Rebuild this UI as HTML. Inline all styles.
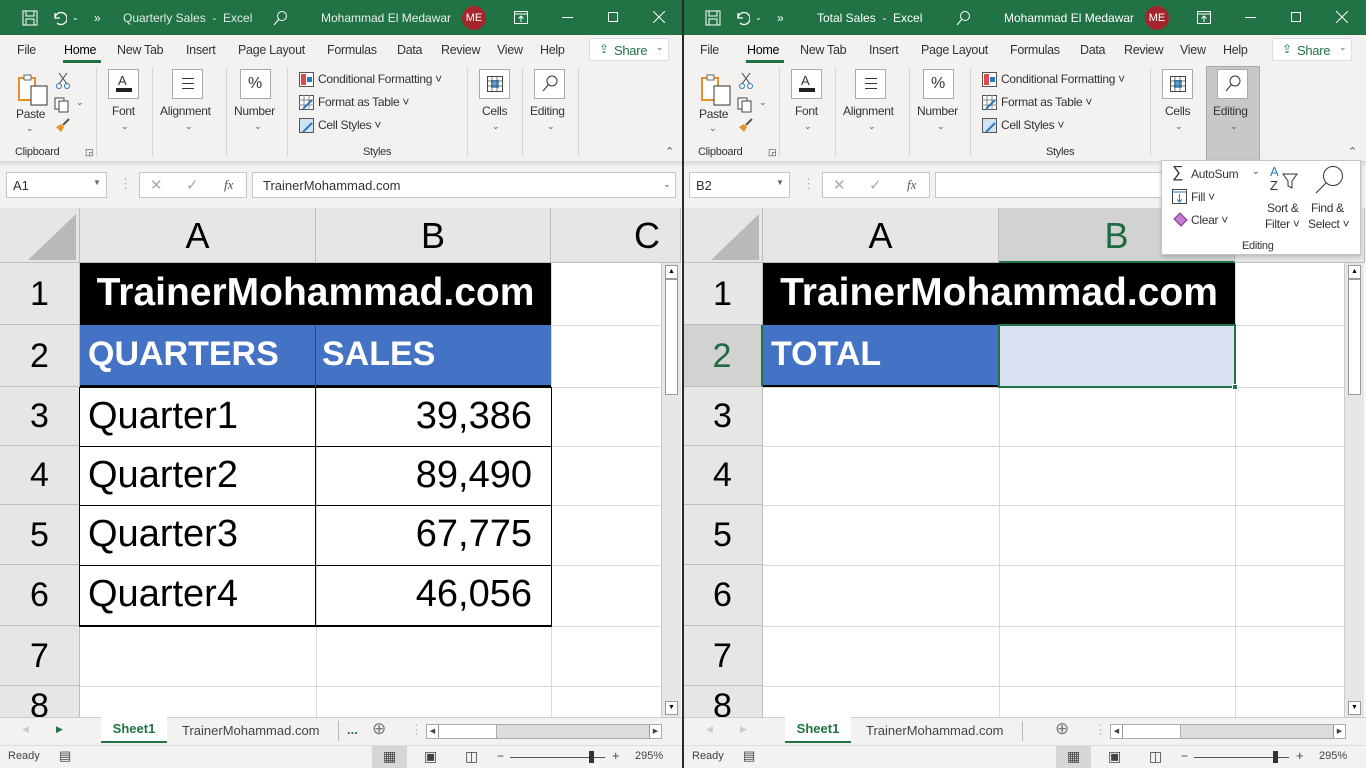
<!DOCTYPE html>
<html><head><meta charset="utf-8"><style>
*{box-sizing:border-box;margin:0;padding:0}
body{width:1366px;height:768px;overflow:hidden;background:#2b2b2b;font-family:"Liberation Sans",sans-serif;position:relative}
.win{position:absolute;top:0;width:682px;height:768px;background:#f3f2f1;overflow:hidden}
.a{position:absolute}
.title{left:0;top:0;width:682px;height:35px;background:#217346;color:#fff;font-size:12px}
.title .a{top:11px}
.tabs{top:35px;left:0;width:682px;height:30px;font-size:12.5px;color:#333;letter-spacing:-0.3px}
.tabs span{position:absolute;top:8px}
.rib{top:65px;left:0;width:682px;height:96px;font-size:12px;color:#333;letter-spacing:-0.3px}
.sep{position:absolute;top:3px;width:1px;height:88px;background:#d6d6d6}
.box{position:absolute;top:4px;width:31px;height:30px;border:1px solid #aaa;background:#fff}
.lbl{position:absolute;font-size:12px;color:#333}
.chev{position:absolute;font-size:9px;color:#555}
.shadow{top:161px;left:0;width:682px;height:6px;background:linear-gradient(#dadada,#f3f2f1)}
.fbox{position:absolute;background:#fff;border:1px solid #c6c6c6;height:26px;top:172px;font-size:13px;color:#333}
.grid{top:208px;left:0;width:682px;height:509px;background:#fff;overflow:hidden}
.rh{position:absolute;left:0;width:80px;background:#e6e6e6;border-bottom:1px solid #bdbdbd;border-right:1px solid #bdbdbd;font-size:34px;text-align:center;color:#000}
.ch{position:absolute;top:0;height:55px;background:#e6e6e6;border-right:1px solid #bdbdbd;border-bottom:1px solid #bdbdbd;font-size:36px;text-align:center;line-height:55px;color:#000}
.vl{position:absolute;width:1px;background:#d9d9d9;top:55px;height:460px}
.hl{position:absolute;height:1px;background:#d9d9d9;left:80px;width:600px}
.cell{position:absolute;font-size:38px;color:#000;white-space:nowrap}
.vs{position:absolute;top:55px;left:661px;width:20px;height:454px;background:#e6e6e6;border-left:1px solid #ccc}
.stabs{top:717px;left:0;width:682px;height:28px;background:#f3f2f1;font-size:13px;color:#444;border-top:1px solid #ccc}
.status{top:745px;left:0;width:682px;height:23px;background:#f3f2f1;font-size:11px;color:#444;border-top:1px solid #ddd}
</style></head><body>

<!-- LEFT WINDOW -->
<div class="win" style="left:0">
 <div class="a title">
  <svg class="a" style="left:22px;top:10px" width="16" height="16"><rect x="1" y="1" width="14" height="14" fill="none" stroke="#fff"/><rect x="4" y="1" width="8" height="5" fill="none" stroke="#fff"/><rect x="4" y="9" width="8" height="6" fill="none" stroke="#fff"/></svg>
  <svg class="a" style="left:51px;top:10px" width="16" height="16"><path d="M4 3v5h5M4 8a6 6 0 1 1 2 5" fill="none" stroke="#fff" stroke-width="1.3"/></svg>
  <span class="a" style="left:72px;font-size:8px;top:13px">⌄</span>
  <span class="a" style="left:94px">»</span>
  <span class="a" style="left:123px;color:#e0ece5">Quarterly Sales&nbsp; - &nbsp;Excel</span>
  <svg class="a" style="left:272px;top:10px" width="16" height="16"><circle cx="10" cy="6" r="4.5" fill="none" stroke="#fff"/><path d="M7 9l-5 6" stroke="#fff"/></svg>
  <span class="a" style="left:321px;color:#e8f0eb">Mohammad El Medawar</span>
  <div class="a" style="left:462px;top:6px;width:24px;height:24px;border-radius:12px;background:#a4262c;font-size:11px;line-height:24px;text-align:center">ME</div>
  <svg class="a" style="left:514px;top:11px" width="14" height="13"><rect x="0.5" y="0.5" width="13" height="12" fill="none" stroke="#fff"/><path d="M0 3h14M7 11V5M4.5 7.5L7 5l2.5 2.5" fill="none" stroke="#fff"/></svg>
  <div class="a" style="left:562px;top:17px;width:11px;height:1px;background:#fff"></div>
  <div class="a" style="left:608px;top:12px;width:10px;height:10px;border:1px solid #fff"></div>
  <svg class="a" style="left:653px;top:11px" width="12" height="12"><path d="M0 0l12 12M12 0L0 12" stroke="#fff"/></svg>
 </div>
 <div class="a tabs">
  <span style="left:17px">File</span><span style="left:64px;color:#000">Home</span><span style="left:117px">New Tab</span><span style="left:186px">Insert</span><span style="left:238px">Page Layout</span><span style="left:327px">Formulas</span><span style="left:397px">Data</span><span style="left:441px">Review</span><span style="left:497px">View</span><span style="left:540px">Help</span>
  <div class="a" style="left:63px;top:25px;width:38px;height:3px;background:#217346"></div>
  <div class="a" style="left:589px;top:3px;width:80px;height:23px;background:#fff;border:1px solid #ddd;border-radius:2px;color:#217346"><span style="left:24px;top:4px;font-size:13px">Share</span><span style="left:9px;top:3px;font-size:12px">⇪</span><span style="left:66px;top:3px;font-size:9px">⌄</span></div>
 </div>
 <div class="a rib">
  <svg class="a" style="left:17px;top:8px" width="32" height="34"><rect x="2" y="5" width="16" height="22" fill="#fff" stroke="#e8912a" stroke-width="2"/><rect x="7" y="2" width="7" height="5" fill="#fff" stroke="#666"/><rect x="14" y="13" width="16" height="19" fill="#fff" stroke="#333"/></svg>
  <span class="lbl" style="left:16px;top:42px">Paste</span><span class="chev" style="left:26px;top:58px">⌄</span>
  <svg class="a" style="left:56px;top:7px" width="14" height="18"><path d="M3 1l8 11M11 1L3 12" stroke="#444"/><circle cx="3" cy="14" r="2.5" fill="none" stroke="#2b79c2"/><circle cx="11" cy="14" r="2.5" fill="none" stroke="#2b79c2"/></svg>
  <svg class="a" style="left:54px;top:32px" width="16" height="16"><rect x="1" y="1" width="9" height="11" fill="#fff" stroke="#444"/><rect x="5" y="4" width="9" height="11" fill="#fff" stroke="#444"/></svg>
  <span class="chev" style="left:76px;top:32px">⌄</span>
  <svg class="a" style="left:54px;top:53px" width="16" height="16"><path d="M9 7l6-6" stroke="#555" stroke-width="2"/><path d="M2 9l5-3 3 3-3 5z" fill="#e8912a"/></svg>
  <span class="lbl" style="left:15px;top:81px;font-size:11px">Clipboard</span><span class="lbl" style="left:85px;top:82px;font-size:9px">◲</span>
  <div class="sep" style="left:96px"></div>
  <div class="box" style="left:108px"><span class="a" style="left:9px;top:3px;font-size:13px">A</span><div class="a" style="left:7px;top:18px;width:16px;height:4px;background:#222"></div></div>
  <span class="lbl" style="left:112px;top:39px">Font</span><span class="chev" style="left:121px;top:56px">⌄</span>
  <div class="sep" style="left:152px"></div>
  <div class="box" style="left:172px"><div class="a" style="left:9px;top:8px;width:12px;border-top:1px solid #333;height:11px;border-bottom:1px solid #333"></div><div class="a" style="left:9px;top:13px;width:12px;height:1px;background:#333"></div></div>
  <span class="lbl" style="left:160px;top:39px">Alignment</span><span class="chev" style="left:185px;top:56px">⌄</span>
  <div class="sep" style="left:226px"></div>
  <div class="box" style="left:240px"><span class="a" style="left:7px;top:5px;font-size:16px">%</span></div>
  <span class="lbl" style="left:234px;top:39px">Number</span><span class="chev" style="left:254px;top:56px">⌄</span>
  <div class="sep" style="left:287px"></div>
  <svg class="a" style="left:299px;top:7px" width="15" height="15"><rect x=".5" y=".5" width="14" height="14" fill="#fff" stroke="#555"/><rect x="2" y="2" width="5" height="11" fill="#e04a4a"/><rect x="8" y="5" width="5" height="5" fill="#2b79c2"/></svg>
  <span class="lbl" style="left:318px;top:7px">Conditional Formatting ˅</span>
  <svg class="a" style="left:299px;top:30px" width="15" height="15"><rect x=".5" y=".5" width="14" height="14" fill="#fff" stroke="#555"/><path d="M0 5h15M5 0v15M10 0v15M0 10h15" stroke="#888"/><path d="M4 14l9-9" stroke="#2b79c2" stroke-width="2"/></svg>
  <span class="lbl" style="left:318px;top:30px">Format as Table ˅</span>
  <svg class="a" style="left:299px;top:53px" width="15" height="15"><rect x=".5" y=".5" width="14" height="14" fill="#cfe3f5" stroke="#555"/><path d="M4 14l9-9" stroke="#2b79c2" stroke-width="2"/></svg>
  <span class="lbl" style="left:318px;top:53px">Cell Styles ˅</span>
  <span class="lbl" style="left:363px;top:81px;font-size:11px">Styles</span>
  <div class="sep" style="left:467px"></div>
  <div class="box" style="left:479px"><svg class="a" style="left:7px;top:6px" width="16" height="16"><rect x=".5" y=".5" width="15" height="15" fill="#fff" stroke="#444"/><rect x="4" y="4" width="8" height="8" fill="#5aa0dc"/><path d="M0 5h16M0 10h16M5 0v16M10 0v16" stroke="#444" stroke-width=".7"/></svg></div>
  <span class="lbl" style="left:482px;top:39px">Cells</span><span class="chev" style="left:492px;top:56px">⌄</span>
  <div class="sep" style="left:522px"></div>
  <div class="box" style="left:534px"><svg class="a" style="left:7px;top:5px" width="16" height="18"><circle cx="10" cy="6" r="5" fill="none" stroke="#333"/><path d="M6.5 9.5L1 16" stroke="#333"/></svg></div>
  <span class="lbl" style="left:530px;top:39px">Editing</span><span class="chev" style="left:547px;top:56px">⌄</span>
  <div class="sep" style="left:578px"></div>
  <span class="chev" style="left:665px;top:80px;font-size:11px">⌃</span>
 </div>
 <div class="a shadow"></div>
 <div class="fbox" style="left:6px;width:101px"><span class="a" style="left:6px;top:5px">A1</span><span class="a" style="left:86px;top:5px;font-size:8px;color:#666">▼</span></div>
 <span class="a" style="left:119px;top:176px;color:#aaa;font-size:13px">⋮</span>
 <div class="fbox" style="left:139px;width:108px"><span class="a" style="left:10px;top:3px;color:#aaa;font-size:15px">✕</span><span class="a" style="left:46px;top:3px;color:#aaa;font-size:15px">✓</span><span class="a" style="left:84px;top:4px;font-style:italic;font-family:'Liberation Serif',serif;color:#555">fx</span></div>
 <div class="fbox" style="left:252px;width:424px"><span class="a" style="left:10px;top:5px">TrainerMohammad.com</span><span class="a" style="left:410px;top:6px;font-size:9px;color:#555">⌄</span></div>

 <div class="a grid">
  <div class="a" style="left:0;top:0;width:80px;height:55px;background:#e6e6e6;border-right:1px solid #bdbdbd;border-bottom:1px solid #bdbdbd"></div>
  <svg class="a" style="left:22px;top:4px" width="56" height="50"><path d="M54 2V48H6z" fill="#b9b9b9"/></svg>
  <div class="ch" style="left:80px;width:236px">A</div>
  <div class="ch" style="left:316px;width:235px">B</div>
  <div class="ch" style="left:551px;width:130px;text-align:left;padding-left:83px">C</div>
  <div class="rh" style="top:55px;height:62px;line-height:62px">1</div>
  <div class="rh" style="top:117px;height:62px;line-height:62px">2</div>
  <div class="rh" style="top:179px;height:59px;line-height:59px">3</div>
  <div class="rh" style="top:238px;height:59px;line-height:59px">4</div>
  <div class="rh" style="top:297px;height:60px;line-height:60px">5</div>
  <div class="rh" style="top:357px;height:61px;line-height:61px">6</div>
  <div class="rh" style="top:418px;height:60px;line-height:60px">7</div>
  <div class="rh" style="top:478px;height:60px;line-height:40px;overflow:hidden">8</div>
  <div class="vl" style="left:316px"></div><div class="vl" style="left:551px"></div>
  <div class="hl" style="top:117px"></div><div class="hl" style="top:179px"></div><div class="hl" style="top:238px"></div><div class="hl" style="top:297px"></div><div class="hl" style="top:357px"></div><div class="hl" style="top:418px"></div><div class="hl" style="top:478px"></div>
  <div class="a" style="left:80px;top:55px;width:471px;height:62px;background:#000"></div>
  <div class="cell" style="left:80px;top:63px;width:471px;text-align:center;color:#fff;font-weight:bold;font-size:39px">TrainerMohammad.com</div>
  <div class="a" style="left:80px;top:117px;width:471px;height:62px;background:#4472c4;border-bottom:2px solid #000"></div>
  <div class="a" style="left:315px;top:117px;width:1px;height:62px;background:#2a4a80"></div>
  <div class="cell" style="left:88px;top:127px;color:#fff;font-weight:bold;font-size:34px">QUARTERS</div>
  <div class="cell" style="left:322px;top:127px;color:#fff;font-weight:bold;font-size:34px">SALES</div>
  <div class="a" style="left:79px;top:179px;width:473px;height:240px;border:1px solid #000;border-bottom:2px solid #000"></div>
  <div class="a" style="left:315px;top:179px;width:1px;height:240px;background:#000"></div>
  <div class="a" style="left:80px;top:238px;width:471px;height:1px;background:#000"></div>
  <div class="a" style="left:80px;top:297px;width:471px;height:1px;background:#000"></div>
  <div class="a" style="left:80px;top:357px;width:471px;height:1px;background:#000"></div>
  <div class="cell" style="left:88px;top:187px">Quarter1</div><div class="cell" style="left:316px;width:216px;text-align:right;top:187px">39,386</div>
  <div class="cell" style="left:88px;top:246px">Quarter2</div><div class="cell" style="left:316px;width:216px;text-align:right;top:246px">89,490</div>
  <div class="cell" style="left:88px;top:305px">Quarter3</div><div class="cell" style="left:316px;width:216px;text-align:right;top:305px">67,775</div>
  <div class="cell" style="left:88px;top:365px">Quarter4</div><div class="cell" style="left:316px;width:216px;text-align:right;top:365px">46,056</div>
  <div class="vs"><div class="a" style="left:3px;top:2px;width:13px;height:14px;background:#fff;border:1px solid #999;font-size:7px;text-align:center;line-height:12px">▲</div><div class="a" style="left:3px;top:16px;width:13px;height:116px;background:#fff;border:1px solid #999"></div><div class="a" style="left:3px;bottom:2px;width:13px;height:14px;background:#fff;border:1px solid #999;font-size:7px;text-align:center;line-height:12px">▼</div></div>
 </div>
 <div class="a stabs">
  <span class="a" style="left:22px;top:6px;color:#ccc;font-size:9px">◀</span><span class="a" style="left:56px;top:6px;color:#217346;font-size:9px">▶</span>
  <div class="a" style="left:101px;top:-1px;width:66px;height:26px;background:#fff;border-bottom:2px solid #217346;color:#217346;font-weight:bold;text-align:center;line-height:24px">Sheet1</div>
  <span class="a" style="left:182px;top:5px">TrainerMohammad.com</span>
  <div class="a" style="left:338px;top:3px;width:1px;height:20px;background:#bbb"></div>
  <span class="a" style="left:347px;top:4px;color:#217346;font-weight:bold">...</span>
  <span class="a" style="left:372px;top:1px;font-size:17px;color:#777">⊕</span>
  <span class="a" style="left:410px;top:4px;color:#bbb">⋮</span>
  <div class="a" style="left:426px;top:6px;width:236px;height:15px;background:#ddd;border:1px solid #aaa"><div class="a" style="left:0;top:0;width:12px;height:13px;background:#fff;border-right:1px solid #999;font-size:7px;line-height:13px;text-align:center">◀</div><div class="a" style="left:12px;top:0;width:58px;height:13px;background:#fff;border-right:1px solid #aaa"></div><div class="a" style="right:0;top:0;width:12px;height:13px;background:#fff;border-left:1px solid #999;font-size:7px;line-height:13px;text-align:center">▶</div></div>
 </div>
 <div class="a status">
  <span class="a" style="left:8px;top:4px">Ready</span><span class="a" style="left:59px;top:2px;font-size:13px">▤</span>
  <div class="a" style="left:372px;top:0;width:35px;height:23px;background:#d6d6d6"></div>
  <span class="a" style="left:383px;top:2px;font-size:14px">▦</span><span class="a" style="left:424px;top:2px;font-size:14px">▣</span><span class="a" style="left:465px;top:2px;font-size:14px">◫</span>
  <span class="a" style="left:497px;top:3px;font-size:12px">−</span>
  <div class="a" style="left:510px;top:11px;width:95px;height:1px;background:#555"></div>
  <div class="a" style="left:589px;top:5px;width:5px;height:12px;background:#333"></div>
  <span class="a" style="left:612px;top:2px;font-size:13px">+</span><span class="a" style="left:635px;top:4px">295%</span>
 </div>
</div>

<!-- RIGHT WINDOW -->
<div class="win" style="left:684px;width:682px">
 <div class="a title">
  <svg class="a" style="left:21px;top:10px" width="16" height="16"><rect x="1" y="1" width="14" height="14" fill="none" stroke="#fff"/><rect x="4" y="1" width="8" height="5" fill="none" stroke="#fff"/><rect x="4" y="9" width="8" height="6" fill="none" stroke="#fff"/></svg>
  <svg class="a" style="left:50px;top:10px" width="16" height="16"><path d="M4 3v5h5M4 8a6 6 0 1 1 2 5" fill="none" stroke="#fff" stroke-width="1.3"/></svg>
  <span class="a" style="left:71px;font-size:8px;top:13px">⌄</span>
  <span class="a" style="left:93px">»</span>
  <span class="a" style="left:133px;color:#fff">Total Sales&nbsp; - &nbsp;Excel</span>
  <svg class="a" style="left:271px;top:10px" width="16" height="16"><circle cx="10" cy="6" r="4.5" fill="none" stroke="#fff"/><path d="M7 9l-5 6" stroke="#fff"/></svg>
  <span class="a" style="left:320px;color:#fff">Mohammad El Medawar</span>
  <div class="a" style="left:461px;top:6px;width:24px;height:24px;border-radius:12px;background:#a4262c;font-size:11px;line-height:24px;text-align:center">ME</div>
  <svg class="a" style="left:513px;top:11px" width="14" height="13"><rect x="0.5" y="0.5" width="13" height="12" fill="none" stroke="#fff"/><path d="M0 3h14M7 11V5M4.5 7.5L7 5l2.5 2.5" fill="none" stroke="#fff"/></svg>
  <div class="a" style="left:561px;top:17px;width:11px;height:1px;background:#fff"></div>
  <div class="a" style="left:607px;top:12px;width:10px;height:10px;border:1px solid #fff"></div>
  <svg class="a" style="left:652px;top:11px" width="12" height="12"><path d="M0 0l12 12M12 0L0 12" stroke="#fff"/></svg>
 </div>
 <div class="a tabs" style="left:-1px">
  <span style="left:17px">File</span><span style="left:64px;color:#000">Home</span><span style="left:117px">New Tab</span><span style="left:186px">Insert</span><span style="left:238px">Page Layout</span><span style="left:327px">Formulas</span><span style="left:397px">Data</span><span style="left:441px">Review</span><span style="left:497px">View</span><span style="left:540px">Help</span>
  <div class="a" style="left:63px;top:25px;width:38px;height:3px;background:#217346"></div>
  <div class="a" style="left:589px;top:3px;width:80px;height:23px;background:#fff;border:1px solid #ddd;border-radius:2px;color:#217346"><span style="left:24px;top:4px;font-size:13px">Share</span><span style="left:9px;top:3px;font-size:12px">⇪</span><span style="left:66px;top:3px;font-size:9px">⌄</span></div>
 </div>
 <div class="a rib" style="left:-1px">
  <svg class="a" style="left:17px;top:8px" width="32" height="34"><rect x="2" y="5" width="16" height="22" fill="#fff" stroke="#e8912a" stroke-width="2"/><rect x="7" y="2" width="7" height="5" fill="#fff" stroke="#666"/><rect x="14" y="13" width="16" height="19" fill="#fff" stroke="#333"/></svg>
  <span class="lbl" style="left:16px;top:42px">Paste</span><span class="chev" style="left:26px;top:58px">⌄</span>
  <svg class="a" style="left:56px;top:7px" width="14" height="18"><path d="M3 1l8 11M11 1L3 12" stroke="#444"/><circle cx="3" cy="14" r="2.5" fill="none" stroke="#2b79c2"/><circle cx="11" cy="14" r="2.5" fill="none" stroke="#2b79c2"/></svg>
  <svg class="a" style="left:54px;top:32px" width="16" height="16"><rect x="1" y="1" width="9" height="11" fill="#fff" stroke="#444"/><rect x="5" y="4" width="9" height="11" fill="#fff" stroke="#444"/></svg>
  <span class="chev" style="left:76px;top:32px">⌄</span>
  <svg class="a" style="left:54px;top:53px" width="16" height="16"><path d="M9 7l6-6" stroke="#555" stroke-width="2"/><path d="M2 9l5-3 3 3-3 5z" fill="#e8912a"/></svg>
  <span class="lbl" style="left:15px;top:81px;font-size:11px">Clipboard</span><span class="lbl" style="left:85px;top:82px;font-size:9px">◲</span>
  <div class="sep" style="left:96px"></div>
  <div class="box" style="left:108px"><span class="a" style="left:9px;top:3px;font-size:13px">A</span><div class="a" style="left:7px;top:18px;width:16px;height:4px;background:#222"></div></div>
  <span class="lbl" style="left:112px;top:39px">Font</span><span class="chev" style="left:121px;top:56px">⌄</span>
  <div class="sep" style="left:152px"></div>
  <div class="box" style="left:172px"><div class="a" style="left:9px;top:8px;width:12px;border-top:1px solid #333;height:11px;border-bottom:1px solid #333"></div><div class="a" style="left:9px;top:13px;width:12px;height:1px;background:#333"></div></div>
  <span class="lbl" style="left:160px;top:39px">Alignment</span><span class="chev" style="left:185px;top:56px">⌄</span>
  <div class="sep" style="left:226px"></div>
  <div class="box" style="left:240px"><span class="a" style="left:7px;top:5px;font-size:16px">%</span></div>
  <span class="lbl" style="left:234px;top:39px">Number</span><span class="chev" style="left:254px;top:56px">⌄</span>
  <div class="sep" style="left:287px"></div>
  <svg class="a" style="left:299px;top:7px" width="15" height="15"><rect x=".5" y=".5" width="14" height="14" fill="#fff" stroke="#555"/><rect x="2" y="2" width="5" height="11" fill="#e04a4a"/><rect x="8" y="5" width="5" height="5" fill="#2b79c2"/></svg>
  <span class="lbl" style="left:318px;top:7px">Conditional Formatting ˅</span>
  <svg class="a" style="left:299px;top:30px" width="15" height="15"><rect x=".5" y=".5" width="14" height="14" fill="#fff" stroke="#555"/><path d="M0 5h15M5 0v15M10 0v15M0 10h15" stroke="#888"/><path d="M4 14l9-9" stroke="#2b79c2" stroke-width="2"/></svg>
  <span class="lbl" style="left:318px;top:30px">Format as Table ˅</span>
  <svg class="a" style="left:299px;top:53px" width="15" height="15"><rect x=".5" y=".5" width="14" height="14" fill="#cfe3f5" stroke="#555"/><path d="M4 14l9-9" stroke="#2b79c2" stroke-width="2"/></svg>
  <span class="lbl" style="left:318px;top:53px">Cell Styles ˅</span>
  <span class="lbl" style="left:363px;top:81px;font-size:11px">Styles</span>
  <div class="sep" style="left:467px"></div>
  <div class="box" style="left:479px"><svg class="a" style="left:7px;top:6px" width="16" height="16"><rect x=".5" y=".5" width="15" height="15" fill="#fff" stroke="#444"/><rect x="4" y="4" width="8" height="8" fill="#5aa0dc"/><path d="M0 5h16M0 10h16M5 0v16M10 0v16" stroke="#444" stroke-width=".7"/></svg></div>
  <span class="lbl" style="left:482px;top:39px">Cells</span><span class="chev" style="left:492px;top:56px">⌄</span>
  <div class="a" style="left:523px;top:1px;width:54px;height:95px;background:#c8c8c8;border:1px solid #aaa"></div>
  <div class="box" style="left:534px"><svg class="a" style="left:7px;top:5px" width="16" height="18"><circle cx="10" cy="6" r="5" fill="none" stroke="#333"/><path d="M6.5 9.5L1 16" stroke="#333"/></svg></div>
  <span class="lbl" style="left:530px;top:39px">Editing</span><span class="chev" style="left:547px;top:56px">⌄</span>
  <span class="chev" style="left:665px;top:80px;font-size:11px">⌃</span>
 </div>
 <div class="a shadow"></div>
 <div class="fbox" style="left:5px;width:101px"><span class="a" style="left:6px;top:5px">B2</span><span class="a" style="left:86px;top:5px;font-size:8px;color:#666">▼</span></div>
 <span class="a" style="left:118px;top:176px;color:#aaa;font-size:13px">⋮</span>
 <div class="fbox" style="left:138px;width:108px"><span class="a" style="left:10px;top:3px;color:#aaa;font-size:15px">✕</span><span class="a" style="left:46px;top:3px;color:#aaa;font-size:15px">✓</span><span class="a" style="left:84px;top:4px;font-style:italic;font-family:'Liberation Serif',serif;color:#555">fx</span></div>
 <div class="fbox" style="left:251px;width:424px"></div>

 <div class="a grid" style="left:-1px">
  <div class="a" style="left:0;top:0;width:80px;height:55px;background:#e6e6e6;border-right:1px solid #bdbdbd;border-bottom:1px solid #bdbdbd"></div>
  <svg class="a" style="left:22px;top:4px" width="56" height="50"><path d="M54 2V48H6z" fill="#b9b9b9"/></svg>
  <div class="ch" style="left:80px;width:236px">A</div>
  <div class="ch" style="left:316px;width:236px;background:#d2d2d2;color:#1e6b41;border-bottom:2px solid #217346">B</div>
  <div class="ch" style="left:552px;width:130px"></div>
  <div class="rh" style="top:55px;height:62px;line-height:62px">1</div>
  <div class="rh" style="top:117px;height:62px;line-height:62px;background:#d2d2d2;color:#1e6b41;border-right:2px solid #217346">2</div>
  <div class="rh" style="top:179px;height:59px;line-height:59px">3</div>
  <div class="rh" style="top:238px;height:59px;line-height:59px">4</div>
  <div class="rh" style="top:297px;height:60px;line-height:60px">5</div>
  <div class="rh" style="top:357px;height:61px;line-height:61px">6</div>
  <div class="rh" style="top:418px;height:60px;line-height:60px">7</div>
  <div class="rh" style="top:478px;height:60px;line-height:40px;overflow:hidden">8</div>
  <div class="vl" style="left:316px"></div><div class="vl" style="left:552px"></div>
  <div class="hl" style="top:117px"></div><div class="hl" style="top:179px"></div><div class="hl" style="top:238px"></div><div class="hl" style="top:297px"></div><div class="hl" style="top:357px"></div><div class="hl" style="top:418px"></div><div class="hl" style="top:478px"></div>
  <div class="a" style="left:80px;top:55px;width:472px;height:62px;background:#000"></div>
  <div class="cell" style="left:80px;top:63px;width:472px;text-align:center;color:#fff;font-weight:bold;font-size:39px">TrainerMohammad.com</div>
  <div class="a" style="left:80px;top:117px;width:236px;height:62px;background:#4472c4;border-bottom:2px solid #000"></div>
  <div class="cell" style="left:88px;top:127px;color:#fff;font-weight:bold;font-size:34px">TOTAL</div>
  <div class="a" style="left:315px;top:116px;width:238px;height:64px;background:#d9e1f2;border:2px solid #217346"></div>
  <div class="a" style="left:549px;top:176px;width:6px;height:6px;background:#217346;border:1px solid #fff"></div>
  <div class="vs"><div class="a" style="left:3px;top:2px;width:13px;height:14px;background:#fff;border:1px solid #999;font-size:7px;text-align:center;line-height:12px">▲</div><div class="a" style="left:3px;top:16px;width:13px;height:116px;background:#fff;border:1px solid #999"></div><div class="a" style="left:3px;bottom:2px;width:13px;height:14px;background:#fff;border:1px solid #999;font-size:7px;text-align:center;line-height:12px">▼</div></div>
 </div>
 <div class="a stabs">
  <span class="a" style="left:22px;top:6px;color:#ccc;font-size:9px">◀</span><span class="a" style="left:56px;top:6px;color:#ccc;font-size:9px">▶</span>
  <div class="a" style="left:101px;top:-1px;width:66px;height:26px;background:#fff;border-bottom:2px solid #217346;color:#217346;font-weight:bold;text-align:center;line-height:24px">Sheet1</div>
  <span class="a" style="left:182px;top:5px">TrainerMohammad.com</span>
  <div class="a" style="left:338px;top:3px;width:1px;height:20px;background:#bbb"></div>
  <span class="a" style="left:371px;top:1px;font-size:17px;color:#777">⊕</span>
  <span class="a" style="left:410px;top:4px;color:#bbb">⋮</span>
  <div class="a" style="left:426px;top:6px;width:236px;height:15px;background:#ddd;border:1px solid #aaa"><div class="a" style="left:0;top:0;width:12px;height:13px;background:#fff;border-right:1px solid #999;font-size:7px;line-height:13px;text-align:center">◀</div><div class="a" style="left:12px;top:0;width:58px;height:13px;background:#fff;border-right:1px solid #aaa"></div><div class="a" style="right:0;top:0;width:12px;height:13px;background:#fff;border-left:1px solid #999;font-size:7px;line-height:13px;text-align:center">▶</div></div>
 </div>
 <div class="a status">
  <span class="a" style="left:8px;top:4px">Ready</span><span class="a" style="left:59px;top:2px;font-size:13px">▤</span>
  <div class="a" style="left:372px;top:0;width:35px;height:23px;background:#d6d6d6"></div>
  <span class="a" style="left:383px;top:2px;font-size:14px">▦</span><span class="a" style="left:424px;top:2px;font-size:14px">▣</span><span class="a" style="left:465px;top:2px;font-size:14px">◫</span>
  <span class="a" style="left:497px;top:3px;font-size:12px">−</span>
  <div class="a" style="left:510px;top:11px;width:95px;height:1px;background:#555"></div>
  <div class="a" style="left:589px;top:5px;width:5px;height:12px;background:#333"></div>
  <span class="a" style="left:612px;top:2px;font-size:13px">+</span><span class="a" style="left:635px;top:4px">295%</span>
 </div>

 <!-- Editing dropdown -->
 <div class="a" style="left:477px;top:160px;width:200px;height:95px;background:#fff;border:1px solid #c6c6c6;box-shadow:0 2px 4px rgba(0,0,0,.2);font-size:12px;color:#333;letter-spacing:-0.3px">
  <span class="a" style="left:10px;top:3px;font-size:16px">∑</span><span class="a" style="left:29px;top:6px">AutoSum</span><span class="a" style="left:90px;top:5px;font-size:9px">⌄</span>
  <svg class="a" style="left:10px;top:28px" width="15" height="15"><rect x=".5" y=".5" width="14" height="14" fill="#fff" stroke="#444"/><path d="M0 3h15M7.5 5v8M5 10.5l2.5 2.5 2.5-2.5" fill="none" stroke="#2b79c2"/></svg>
  <span class="a" style="left:29px;top:29px">Fill ˅</span>
  <svg class="a" style="left:10px;top:51px" width="16" height="15"><path d="M8 1l7 7-6 6-7-7z" fill="#c47bd6" stroke="#7a3a8a"/></svg>
  <span class="a" style="left:29px;top:52px">Clear ˅</span>
  <span class="a" style="left:108px;top:3px;font-size:13px;color:#2b79c2">A</span><span class="a" style="left:108px;top:17px;font-size:13px">Z</span>
  <svg class="a" style="left:120px;top:12px" width="16" height="16"><path d="M1 1h14l-5 7v7l-4-2V8z" fill="none" stroke="#333"/></svg>
  <span class="a" style="left:105px;top:40px">Sort &amp;</span><span class="a" style="left:103px;top:56px">Filter ˅</span>
  <svg class="a" style="left:152px;top:4px" width="30" height="30"><circle cx="19" cy="11" r="9.5" fill="none" stroke="#333"/><path d="M12 18L2 28" stroke="#333"/></svg>
  <span class="a" style="left:149px;top:40px">Find &amp;</span><span class="a" style="left:146px;top:56px">Select ˅</span>
  <span class="a" style="left:80px;top:79px;font-size:11px">Editing</span>
 </div>
</div>
</body></html>
